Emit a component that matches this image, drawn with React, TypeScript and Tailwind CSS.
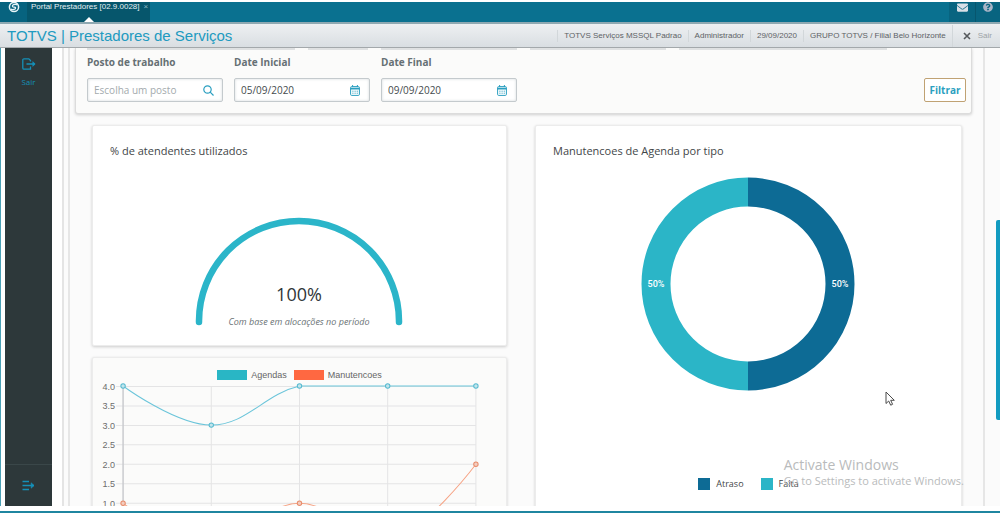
import type { ReactNode } from "react"
import { FaEnvelope, FaQuestionCircle } from "react-icons/fa"

const sessionInfo = [
  "TOTVS Serviços MSSQL Padrao",
  "Administrador",
  "29/09/2020",
  "GRUPO TOTVS / Filial Belo Horizonte",
]

const yLabels = ["4.0", "3.5", "3.0", "2.5", "2.0", "1.5", "1.0"]
const xTicks = [31, 119, 207, 295, 383]
const agendas = [6, 45, 6, 6, 6]
const manutencoes = [123, 162, 123, 162, 84]

function TopBar() {
  return (
    <div className="flex h-5 shrink-0 items-stretch justify-between overflow-hidden bg-[#0a7190]">
      <div className="flex">
        <button type="button" aria-label="Início" className="flex w-[27px] items-start justify-center bg-[#07637f]">
          <svg width="12" height="12" viewBox="0 0 12 12" fill="none" stroke="#e8f5f8">
            <circle cx="6" cy="5" r="4.6" strokeWidth="1.5" />
            <path d="M9.500 3C7 1.600 3.600 3 4.600 4.600c.7 1 2.800.2 3 1.200.2 1.600-2.800 2.400-5 1.400" strokeWidth="1.3" />
          </svg>
        </button>
        <div className="relative flex w-[123px] items-start gap-1 bg-[#06566c] pl-1 text-[8px] leading-[10px] text-[#e3eff2]">
          <span className="whitespace-nowrap">Portal Prestadores [02.9.0028]</span>
          <button type="button" aria-label="Fechar aba" className="text-[#8fb8c4]">
            ×
          </button>
          <svg className="absolute bottom-0 left-[57px]" width="10" height="5" viewBox="0 0 10 5">
            <path d="M0 5 5 0l5 5z" fill="#fff" />
          </svg>
        </div>
      </div>
      <div className="flex bg-[#086480]">
        <button type="button" aria-label="Mensagens" className="flex w-[26px] items-start justify-center">
          <FaEnvelope size={11} color="#d9dfe6" />
        </button>
        <button
          type="button"
          aria-label="Ajuda"
          className="flex w-[25px] items-start justify-center border-l border-[#07566e]"
        >
          <FaQuestionCircle size={10} color="#a9b4c6" />
        </button>
      </div>
    </div>
  )
}

function Header() {
  return (
    <header className="flex h-[26px] shrink-0 items-center justify-between border-t-2 border-b border-t-[#8fa9b2] border-b-[#a3a8ab] bg-linear-to-b from-[#eef0f2] to-[#d9dee2] pl-[7px]">
      <h1 className="text-[15px] leading-5 text-[#219ac0]">TOTVS | Prestadores de Serviços</h1>
      <div className="flex items-center text-[8px] leading-3 text-[#5d6265]">
        {sessionInfo.map((item) => (
          <span key={item} className="border-l border-[#d2d7da] px-[6px] whitespace-nowrap">
            {item}
          </span>
        ))}
        <button type="button" className="flex h-[22px] items-center gap-[7px] border-l border-[#d2d7da] pr-2 pl-[10px] text-[#9da3a7]">
          <svg width="8" height="8" viewBox="0 0 8 8" stroke="#55595c" strokeWidth="1.6">
            <path d="M1 1l6 6M7 1 1 7" />
          </svg>
          Sair
        </button>
      </div>
    </header>
  )
}

function Sidebar() {
  return (
    <nav className="ml-1 flex w-[47px] shrink-0 flex-col justify-between bg-[#2d383a] text-[#1590b8]">
      <a
        href="#sair"
        className="flex flex-col items-center gap-[7px] pt-[10px] font-['Open_Sans',sans-serif] text-[8px] leading-[10px]"
      >
        <svg width="14" height="12" viewBox="0 0 14 12" fill="none" stroke="currentColor" strokeWidth="1.3">
          <path d="M8.500 3.500V2.600L6.800.8H2A1.200 1.200 0 0 0 .8 2v8A1.200 1.200 0 0 0 2 11.200h6.500V8.500M4.500 6H13" />
          <path d="M10.800 3.600 13.200 6l-2.400 2.400z" fill="currentColor" strokeWidth=".6" />
        </svg>
        Sair
      </a>
      <button
        type="button"
        aria-label="Expandir menu"
        className="flex h-[42px] items-center justify-center border-t border-[#3a4749]"
      >
        <svg width="13" height="11" viewBox="0 0 13 11" fill="none" stroke="currentColor" strokeWidth="1.3">
          <path d="M.5 1.500h6.500M.5 5.500H12M.5 9.500h6.500" />
          <path d="M9.200 2.800 12 5.500 9.200 8.200z" fill="currentColor" strokeWidth=".6" />
        </svg>
      </button>
    </nav>
  )
}

function CalendarIcon() {
  return (
    <svg width="10" height="11" viewBox="0 0 10 11" fill="none" stroke="#2b9fc0">
      <rect x=".6" y="1.600" width="8.800" height="8.800" rx="1" />
      <path d="M.6 3.600h8.800" strokeWidth="1.800" />
      <path d="M2.600 0v2M7.400 0v2" />
      <path d="M2.300 6.200h5.600M2.300 8.200h5.600" strokeDasharray="1.200 1" strokeWidth=".9" />
    </svg>
  )
}

function SearchIcon() {
  return (
    <svg width="11" height="11" viewBox="0 0 11 11" fill="none" stroke="#2b9fc0" strokeWidth="1.200">
      <circle cx="4.500" cy="4.500" r="3.700" />
      <path d="M7.200 7.200 10.500 10.500" />
    </svg>
  )
}

type FieldProps = { id: string; label: string; value?: string; placeholder?: string; icon: ReactNode }

function Field({ id, label, value, placeholder, icon }: FieldProps) {
  return (
    <div className="flex w-34 flex-col gap-2">
      <label htmlFor={id} className="text-[10px] leading-4 font-bold text-[#667074]">
        {label}
      </label>
      <div className="flex h-6 items-center rounded-[2px] border border-[#c4cacd] bg-white px-[6px] shadow-[inset_0_0_3px_#d5dadc]">
        <input
          id={id}
          defaultValue={value}
          placeholder={placeholder}
          className="min-w-0 flex-1 bg-transparent text-[10px] leading-4 text-[#444b4e] outline-none placeholder:text-[#a3aaad]"
        />
        <span className="flex w-4 shrink-0 justify-center">{icon}</span>
      </div>
    </div>
  )
}

function Filters() {
  return (
    <section className="rounded-b-[3px] border border-t-0 border-[#dcdcdc] bg-[#fbfbfa] px-[11px] pb-[11px] shadow-[0_1px_3px_#cfcfcf]">
      <div className="flex gap-[13px]">
        <div className="h-[2px] w-52 bg-[#dfe1e2]" />
        <div className="h-[2px] w-15 bg-[#dfe1e2]" />
        <div className="h-[2px] w-34 bg-[#dfe1e2]" />
        <div className="h-[2px] w-34 bg-[#dfe1e2]" />
        <div className="h-[2px] w-52 bg-[#dfe1e2]" />
      </div>
      <form className="mt-1 flex items-end gap-[11px]" onSubmit={(e) => e.preventDefault()}>
        <Field id="posto" label="Posto de trabalho" placeholder="Escolha um posto" icon={<SearchIcon />} />
        <Field id="inicio" label="Date Inicial" value="05/09/2020" icon={<CalendarIcon />} />
        <Field id="fim" label="Date Final" value="09/09/2020" icon={<CalendarIcon />} />
        <button
          type="submit"
          className="mr-[-6px] ml-auto h-6 w-[42px] rounded-[2px] border border-[#c0a273] bg-white text-[10px] font-bold text-[#2b9fc0]"
        >
          Filtrar
        </button>
      </form>
    </section>
  )
}

function GaugeCard() {
  return (
    <section className="flex h-[221px] flex-col rounded-[2px] border border-[#ececec] bg-white shadow-[0_1px_3px_#cdcdcd]">
      <h2 className="px-[17px] pt-[17px] text-[11px] leading-4 text-[#3f4648]">% de atendentes utilizados</h2>
      <svg className="mx-auto mt-[57px]" width="214" height="112" viewBox="0 0 214 112">
        <path d="M7 106V105A100 100 0 0 1 207 105V106" fill="none" stroke="#2bb5c9" strokeWidth="6.500" strokeLinecap="round" />
        <text x="107" y="85" textAnchor="middle" fontSize="18" fill="#303638">
          100%
        </text>
        <text x="107" y="109" textAnchor="middle" fontSize="9" fontStyle="italic" fill="#6b7376">
          Com base em alocações no período
        </text>
      </svg>
    </section>
  )
}

function LineCard() {
  return (
    <section className="h-60 rounded-[2px] border border-[#ececec] bg-[#fbfbfa] pt-3 font-['Liberation_Sans',sans-serif] shadow-[0_1px_3px_#cdcdcd]">
      <div className="flex justify-center gap-[7px] text-[9px] leading-[10px] text-[#666]">
        <span className="flex gap-1">
          <i className="h-[10px] w-[30px] bg-[#29b6c5]" />
          Agendas
        </span>
        <span className="flex gap-1">
          <i className="h-[10px] w-[30px] bg-[#ff6841]" />
          Manutencoes
        </span>
      </div>
      <svg className="w-full" viewBox="1 0 412 190" fill="none">
        <g stroke="#e4e4e5">
          {yLabels.map((label, i) => (
            <path key={label} d={`M24 ${6.5 + i * 19.400}H383`} />
          ))}
          {xTicks.map((x) => (
            <path key={x} d={`M${x} 6V168`} />
          ))}
        </g>
        <path d="M31 6V168" stroke="#bcbfc4" />
        {yLabels.map((label, i) => (
          <text key={label} x="23" y={10 + i * 19.400} textAnchor="end" fontSize="9" fill="#6d6d6d">
            {label}
          </text>
        ))}
        <path d="M31 6C31 6 84 45 119 45S172 14 207 6C242 6 260 6 295 6S383 6 383 6" stroke="#6bc5da" />
        <path
          d="M31 123C31 123 84 162 119 162S172 123 207 123S260 162 295 162C330 154 383 84 383 84"
          stroke="#f6a283"
        />
        {xTicks.map((x, i) => (
          <g key={x}>
            <circle cx={x} cy={manutencoes[i]} r="2.200" fill="#f3cdbf" stroke="#e88c6b" />
            <circle cx={x} cy={agendas[i]} r="2.200" fill="#c3e5ec" stroke="#56bad0" />
          </g>
        ))}
      </svg>
    </section>
  )
}

function DonutCard() {
  return (
    <section className="flex flex-col rounded-[2px] border border-[#ececec] bg-white shadow-[0_1px_3px_#cdcdcd]">
      <h2 className="px-[17px] pt-[17px] text-[11px] leading-4 text-[#3f4648]">Manutencoes de Agenda por tipo</h2>
      <svg className="mx-auto mt-[18px] font-['Roboto',sans-serif]" width="214" height="214" viewBox="0 0 214 214">
        <path d="M107 15a92 92 0 0 1 0 184" fill="none" stroke="#0d6b95" strokeWidth="29" />
        <path d="M107 199a92 92 0 0 1 0-184" fill="none" stroke="#2bb5c7" strokeWidth="29" />
        <g fontSize="9" fontWeight="500" fill="#fff" textAnchor="middle">
          <text x="15" y="110">50%</text>
          <text x="199" y="110">50%</text>
        </g>
      </svg>
      <div className="mt-[87px] flex justify-center gap-[17px] text-[9px] leading-3 text-[#3f4648]">
        <span className="flex gap-[6px]">
          <i className="size-3 bg-[#0d6b95]" />
          Atraso
        </span>
        <span className="flex gap-[6px]">
          <i className="size-3 bg-[#2bb5c7]" />
          Falta
        </span>
      </div>
    </section>
  )
}

export default function App() {
  return (
    <div className="h-screen bg-white pt-[2px] pr-[7px] pb-px font-['Liberation_Sans',sans-serif]">
      <div className="relative flex h-full flex-col overflow-hidden border-b-2 border-[#1f86a0]">
        <TopBar />
        <Header />
        <div className="mb-[5px] flex min-h-0 flex-1 border-l border-[#4aa0b5]">
          <Sidebar />
          <main className="ml-[10px] flex-1 overflow-hidden border-l-2 border-[#e4e4e4] bg-[#fbfbfb] pr-[15px] font-['Open_Sans',sans-serif]">
            <div className="ml-1 h-full border-x-2 border-[#e6e6e6] px-[5px]">
              <div className="mr-[6px]">
                <Filters />
              </div>
              <div className="mt-[11px] mr-4 ml-[17px] grid grid-cols-[414fr_426fr] gap-[28px]">
                <div className="flex flex-col gap-[11px]">
                  <GaugeCard />
                  <LineCard />
                </div>
                <DonutCard />
              </div>
            </div>
          </main>
        </div>

        <div className="absolute top-[218px] right-0 h-50 w-1 rounded-l-[2px] bg-[#129bc0]" />
        <div className="absolute right-9 bottom-[22px] font-['Open_Sans',sans-serif] text-[#b9bbbc]">
          <p className="text-[14px] leading-4">Activate Windows</p>
          <p className="text-[11px] leading-4">Go to Settings to activate Windows.</p>
        </div>
        <svg className="absolute top-[389px] left-[885px]" width="11" height="16" viewBox="0 0 11 16">
          <path d="M1 1v11.500l2.700-2.500 2 4.200 1.900-.9-1.900-4H9.300z" fill="#fff" stroke="#4a4a4a" />
        </svg>
      </div>
    </div>
  )
}
